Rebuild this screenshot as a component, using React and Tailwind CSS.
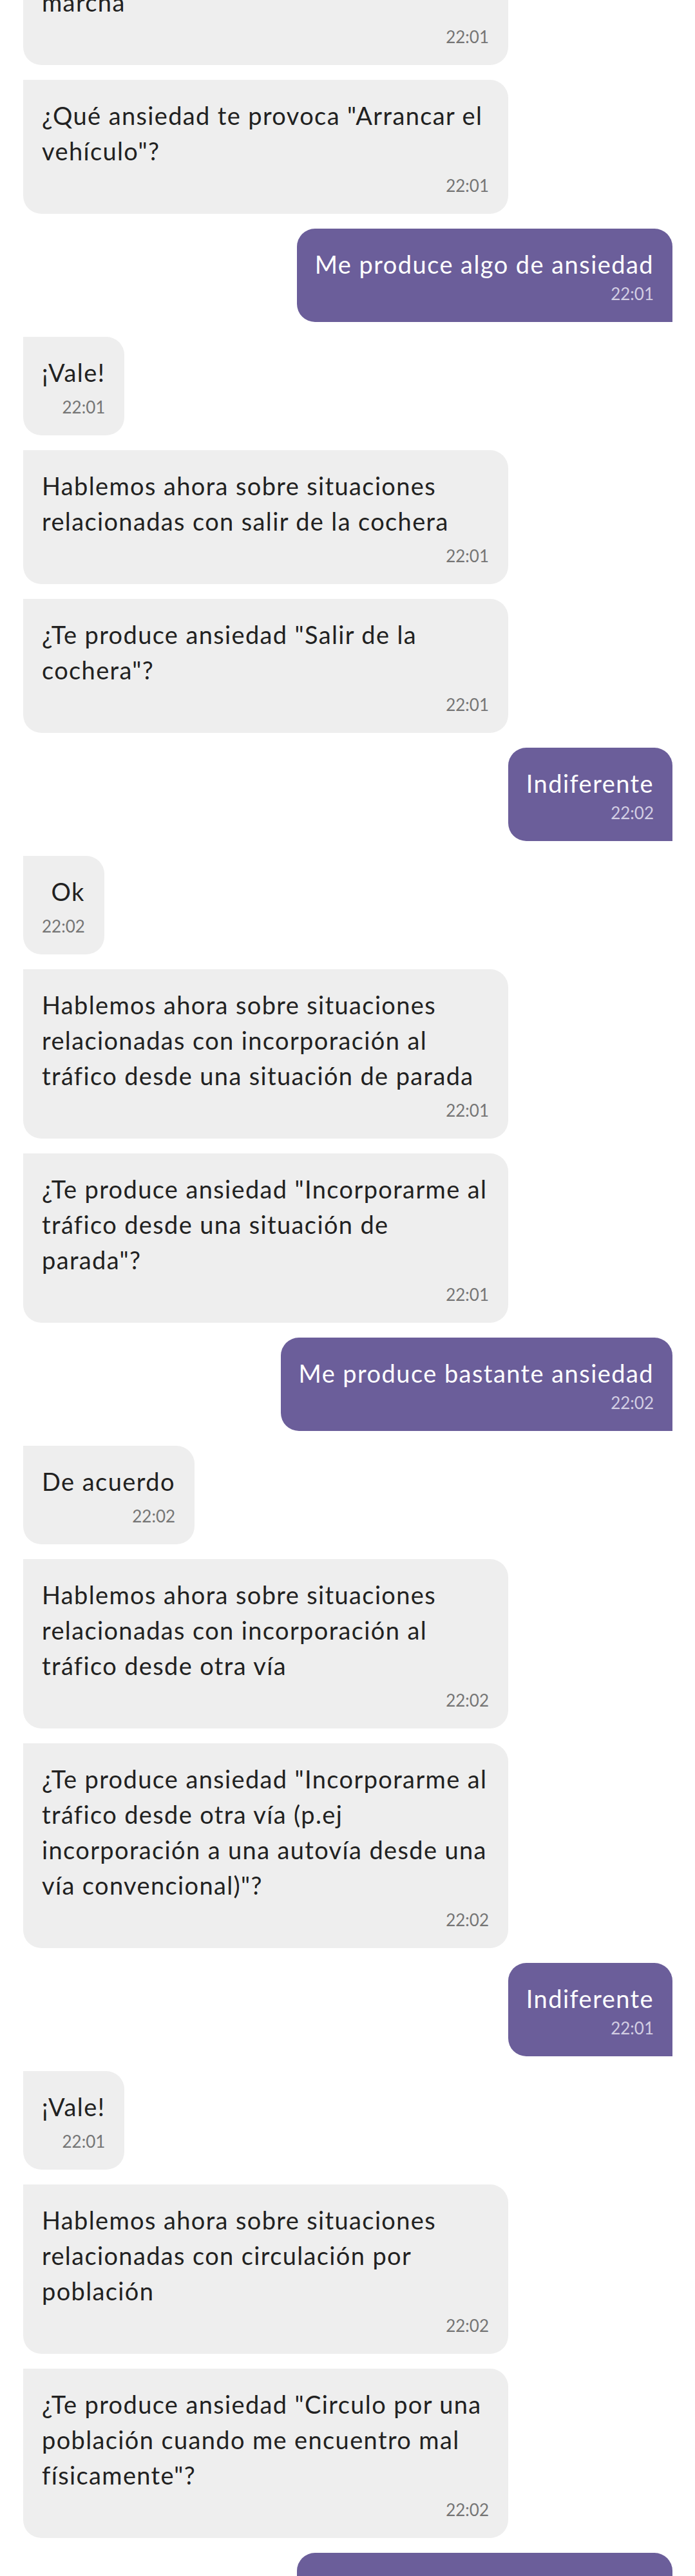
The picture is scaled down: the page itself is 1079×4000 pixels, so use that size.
import React from 'react';

const messages = [
  { from: 'bot', wide: true, text: 'Hablemos ahora sobre situaciones\nrelacionadas con la puesta en\nmarcha', time: '22:01' },
  { from: 'bot', wide: true, text: '¿Qué ansiedad te provoca "Arrancar el\nvehículo"?', time: '22:01' },
  { from: 'me', text: 'Me produce algo de ansiedad', time: '22:01' },
  { from: 'bot', text: '¡Vale!', time: '22:01' },
  { from: 'bot', wide: true, text: 'Hablemos ahora sobre situaciones\nrelacionadas con salir de la cochera', time: '22:01' },
  { from: 'bot', wide: true, text: '¿Te produce ansiedad "Salir de la\ncochera"?', time: '22:01' },
  { from: 'me', text: 'Indiferente', time: '22:02' },
  { from: 'bot', text: 'Ok', time: '22:02' },
  { from: 'bot', wide: true, text: 'Hablemos ahora sobre situaciones\nrelacionadas con incorporación al\ntráfico desde una situación de parada', time: '22:01' },
  { from: 'bot', wide: true, text: '¿Te produce ansiedad "Incorporarme al\ntráfico desde una situación de\nparada"?', time: '22:01' },
  { from: 'me', text: 'Me produce bastante ansiedad', time: '22:02' },
  { from: 'bot', text: 'De acuerdo', time: '22:02' },
  { from: 'bot', wide: true, text: 'Hablemos ahora sobre situaciones\nrelacionadas con incorporación al\ntráfico desde otra vía', time: '22:02' },
  { from: 'bot', wide: true, text: '¿Te produce ansiedad "Incorporarme al\ntráfico desde otra vía (p.ej\nincorporación a una autovía desde una\nvía convencional)"?', time: '22:02' },
  { from: 'me', text: 'Indiferente', time: '22:01' },
  { from: 'bot', text: '¡Vale!', time: '22:01' },
  { from: 'bot', wide: true, text: 'Hablemos ahora sobre situaciones\nrelacionadas con circulación por\npoblación', time: '22:02' },
  { from: 'bot', wide: true, text: '¿Te produce ansiedad "Circulo por una\npoblación cuando me encuentro mal\nfísicamente"?', time: '22:02' },
  { from: 'me', text: 'Me produce algo de ansiedad', time: '22:02' },
];

const Bubble = ({ msg }) => {
  const mine = msg.from === 'me';

  return (
    <div className={mine ? 'flex justify-end' : 'flex justify-start'}>
      <div
        className={
          mine
            ? 'flex flex-col items-end max-w-[753px] bg-[#6b5e9a] rounded-[28px] rounded-br-none pl-[28px] pr-[29px] pt-[28px] pb-[26px]'
            : msg.wide
            ? 'flex flex-col items-end w-[753px] bg-[#eeeeee] rounded-[28px] rounded-tl-none pl-[29px] pr-[30px] pt-[28px] pb-[26px]'
            : 'flex flex-col items-end max-w-[753px] bg-[#eeeeee] rounded-[28px] rounded-tl-none pl-[29px] pr-[30px] pt-[28px] pb-[26px]'
        }
      >
        <p
          className={
            mine
              ? 'text-[38px] leading-[55px] tracking-[0.038em] text-white'
              : msg.wide
              ? 'self-stretch text-[38px] leading-[55px] tracking-[0.036em] text-[#212121]'
              : 'text-[38px] leading-[55px] tracking-[0.038em] text-[#212121]'
          }
        >
          {msg.text.split('\n').map((line, i) => (
            <span key={i} className="block whitespace-nowrap">
              {line}
            </span>
          ))}
        </p>
        <span
          className={
            mine
              ? 'text-[26px] leading-[36px] text-[#d3cee3]'
              : 'mt-2 text-[26px] leading-[36px] text-[#757575]'
          }
        >
          {msg.time}
        </span>
      </div>
    </div>
  );
};

const App = () => {
  return (
    <div className="h-[4000px] overflow-hidden bg-white font-['Lato',sans-serif]">
      {/* chat list, scrolled partway */}
      <div className="-mt-[162px] flex flex-col gap-[23px] pl-[36px] pr-[35px]">
        {messages.map((msg, i) => (
          <Bubble key={i} msg={msg} />
        ))}
      </div>
    </div>
  );
};

export default App;
